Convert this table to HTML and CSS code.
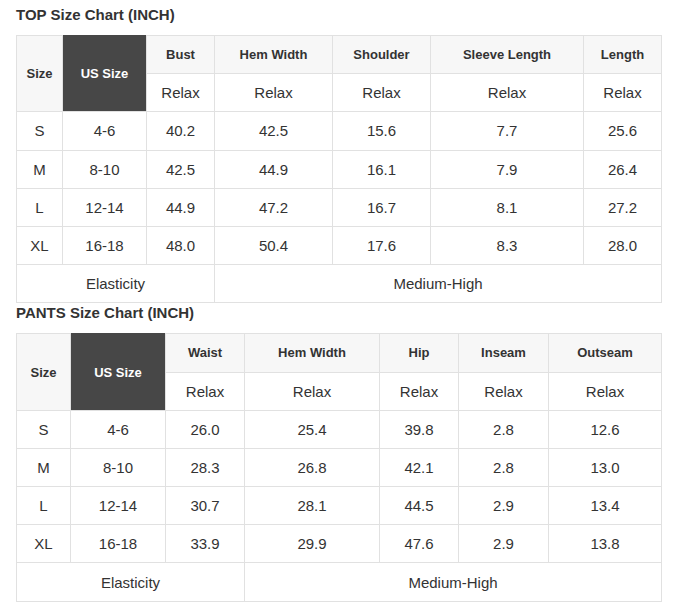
FILE: index.html
```html
<!DOCTYPE html>
<html>
<head>
<meta charset="utf-8">
<link rel="stylesheet" href="styles.css">
</head>
<body>
<div class="page">
  <h3 class="title">TOP Size Chart (INCH)</h3>
  <table class="chart">
    <colgroup>
      <col class="t1"><col class="t2"><col class="t3"><col class="t4"><col class="t5"><col class="t6"><col class="t7">
    </colgroup>
    <tr>
      <th rowspan="2">Size</th>
      <th rowspan="2" class="dark">US Size</th>
      <th>Bust</th><th>Hem Width</th><th>Shoulder</th><th>Sleeve Length</th><th>Length</th>
    </tr>
    <tr><td>Relax</td><td>Relax</td><td>Relax</td><td>Relax</td><td>Relax</td></tr>
    <tr><td>S</td><td>4-6</td><td>40.2</td><td>42.5</td><td>15.6</td><td>7.7</td><td>25.6</td></tr>
    <tr><td>M</td><td>8-10</td><td>42.5</td><td>44.9</td><td>16.1</td><td>7.9</td><td>26.4</td></tr>
    <tr><td>L</td><td>12-14</td><td>44.9</td><td>47.2</td><td>16.7</td><td>8.1</td><td>27.2</td></tr>
    <tr><td>XL</td><td>16-18</td><td>48.0</td><td>50.4</td><td>17.6</td><td>8.3</td><td>28.0</td></tr>
    <tr><td colspan="3">Elasticity</td><td colspan="4">Medium-High</td></tr>
  </table>

  <h3 class="title">PANTS Size Chart (INCH)</h3>
  <table class="chart">
    <colgroup>
      <col class="p1"><col class="p2"><col class="p3"><col class="p4"><col class="p5"><col class="p6"><col class="p7">
    </colgroup>
    <tr>
      <th rowspan="2">Size</th>
      <th rowspan="2" class="dark">US Size</th>
      <th>Waist</th><th>Hem Width</th><th>Hip</th><th>Inseam</th><th>Outseam</th>
    </tr>
    <tr><td>Relax</td><td>Relax</td><td>Relax</td><td>Relax</td><td>Relax</td></tr>
    <tr><td>S</td><td>4-6</td><td>26.0</td><td>25.4</td><td>39.8</td><td>2.8</td><td>12.6</td></tr>
    <tr><td>M</td><td>8-10</td><td>28.3</td><td>26.8</td><td>42.1</td><td>2.8</td><td>13.0</td></tr>
    <tr><td>L</td><td>12-14</td><td>30.7</td><td>28.1</td><td>44.5</td><td>2.9</td><td>13.4</td></tr>
    <tr><td>XL</td><td>16-18</td><td>33.9</td><td>29.9</td><td>47.6</td><td>2.9</td><td>13.8</td></tr>
    <tr><td colspan="3">Elasticity</td><td colspan="4">Medium-High</td></tr>
  </table>
</div>
</body>
</html>
```

FILE: styles.css
```css
html, body {
  margin: 0;
  padding: 0;
  background: #fff;
}
.page {
  padding: 5px 12px 0 16px;
  font-family: "Liberation Sans", Arial, sans-serif;
  color: #333;
}
.title {
  margin: 0 0 10px 0;
  font-size: 15px;
  line-height: 20px;
  font-weight: bold;
  color: #333;
}
.chart {
  border-collapse: collapse;
  table-layout: fixed;
  width: 645px;
}
.chart th, .chart td {
  border: 1px solid #e1e1e1;
  text-align: center;
  vertical-align: middle;
  height: 38.2px;
  padding: 0;
  box-sizing: border-box;
}
.chart th {
  background: #f7f7f7;
  font-size: 13px;
  font-weight: bold;
  color: #333;
}
.chart th.dark {
  background: #474747;
  color: #fff;
  border-color: #474747 #e1e1e1 #e1e1e1 #e1e1e1;
}
.chart td {
  font-size: 15px;
  color: #333;
}
.t1 { width: 46px; }
.t2 { width: 84px; }
.t3 { width: 68px; }
.t4 { width: 118px; }
.t5 { width: 98px; }
.t6 { width: 153px; }
.t7 { width: 78px; }
.p1 { width: 54px; }
.p2 { width: 95px; }
.p3 { width: 79px; }
.p4 { width: 135px; }
.p5 { width: 79px; }
.p6 { width: 90px; }
.p7 { width: 113px; }
```
